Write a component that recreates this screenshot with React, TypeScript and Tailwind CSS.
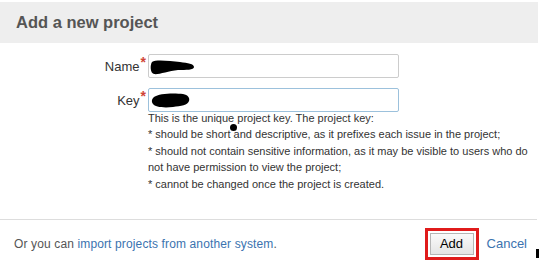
import React from 'react'

function Field({ label, focused, children }: { label: string; focused?: boolean; children?: React.ReactNode }) {
  return (
    <div className="flex items-center">
      <div className="flex w-[148px] items-start justify-end pr-[2px]">
        <span className="mt-[2px] text-[13px] leading-[16px] text-[#333333]">{label}</span>
        <span className="ml-[1px] text-[14px] font-bold leading-[10px] text-[#d04437]">*</span>
      </div>
      <div
        className={
          'relative h-[24px] w-[251px] rounded-[2px] border bg-white ' +
          (focused ? 'border-[#9cc1dc]' : 'border-[#cccccc]')
        }
      >
        {children}
      </div>
    </div>
  )
}

export default function App() {
  return (
    <div className="relative h-[268px] w-[541px] overflow-hidden bg-white font-['Liberation_Sans',Arial,sans-serif]">
      <div className="pt-[2px]">
        <div className="flex h-[41px] w-[538px] items-center bg-[#eeeeee] pl-[16px]">
          <h2 className="text-[16.5px] font-bold text-[#555555]">Add a new project</h2>
        </div>
      </div>

      <div className="h-[176px] pt-[11px]">
        <Field label="Name">
          <svg className="absolute left-[1px] top-[4px]" width="46" height="16" viewBox="0 0 46 16">
            <path d="M2 3 C6 0 20 2 30 3 C38 4 44 5 44 8 C44 11 36 11 28 11 C18 12 8 16 4 15 C0 14 0 6 2 3 Z" fill="#000" />
          </svg>
        </Field>
        <div className="h-[10px]" />
        <Field label="Key" focused>
          <svg className="absolute left-[2px] top-[3px]" width="40" height="17" viewBox="0 0 40 17">
            <path d="M3 5 C8 1 24 1 32 2 C37 3 39 6 38 9 C37 13 30 14 22 15 C12 16 4 15 2 12 C0 9 1 7 3 5 Z" fill="#000" />
          </svg>
        </Field>
        <div className="-mt-[2px] ml-[148px] text-[11px] leading-[16.4px] text-[#333333]">
          <p>This is the unique project key. The project key:</p>
          <p>* should be short and descriptive, as it prefixes each issue in the project;</p>
          <p>* should not contain sensitive information, as it may be visible to users who do</p>
          <p>not have permission to view the project;</p>
          <p>* cannot be changed once the project is created.</p>
        </div>
      </div>

      <div className="flex h-[49px] w-[537px] items-center border-t border-[#dddddd] pl-[14px] pr-[10px]">
        <p className="flex-1 text-[12px] tracking-[0.13px] text-[#555555]">
          Or you can <a className="text-[#3b73af]">import projects from another system</a>.
        </p>
        <div className="border-[3px] border-[#e01b1b] p-[2px]">
          <button className="flex h-[22px] w-[44px] items-center justify-center border border-[#b5b5b5] bg-gradient-to-b from-[#fafafa] to-[#e4e4e4] text-[13px] text-black">
            Add
          </button>
        </div>
        <a className="ml-[8px] text-[13px] text-[#3b73af]">Cancel</a>
      </div>

      <span className="absolute left-[230px] top-[124px] h-[7px] w-[7px] rounded-full bg-black" />
      <span className="absolute left-[536px] top-[249px] h-[9px] w-[3px] bg-black" />
    </div>
  )
}
